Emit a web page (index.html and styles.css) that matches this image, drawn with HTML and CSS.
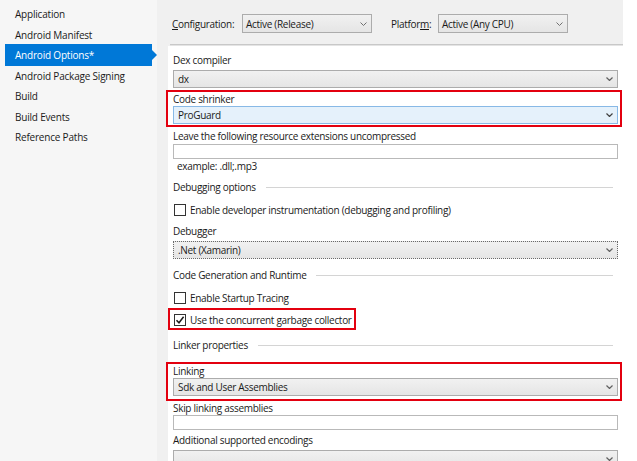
FILE: index.html
```html
<!DOCTYPE html>
<html>
<head>
<meta charset="utf-8">
<link rel="stylesheet" href="styles.css">
</head>
<body>
<div class="app">
  <nav class="sidebar">
    <div class="nav-item">Application</div>
    <div class="nav-item">Android Manifest</div>
    <div class="nav-item selected">Android Options*</div>
    <div class="nav-item">Android Package Signing</div>
    <div class="nav-item">Build</div>
    <div class="nav-item">Build Events</div>
    <div class="nav-item">Reference Paths</div>
  </nav>
  <div class="main">
    <div class="topbar">
      <div class="toprow">
        <span class="toplabel"><u>C</u>onfiguration:</span>
        <div class="combo top-combo"><span>Active (Release)</span><svg class="chev" width="7" height="4" viewBox="0 0 7 4"><path d="M0.5 0.5 L3.5 3.5 L6.5 0.5" fill="none" stroke="#707070" stroke-width="1"/></svg></div>
        <span class="toplabel platform">Platfor<u>m</u>:</span>
        <div class="combo top-combo"><span>Active (Any CPU)</span><svg class="chev" width="7" height="4" viewBox="0 0 7 4"><path d="M0.5 0.5 L3.5 3.5 L6.5 0.5" fill="none" stroke="#707070" stroke-width="1"/></svg></div>
      </div>
      <div class="sep"></div>
    </div>
    <div class="content">
      <div class="label">Dex compiler</div>
      <div class="combo field-combo"><span>dx</span><svg class="chev" width="7" height="4" viewBox="0 0 7 4"><path d="M0.5 0.5 L3.5 3.5 L6.5 0.5" fill="none" stroke="#606060" stroke-width="1.2"/></svg></div>

      <div class="hl hl-shrinker">
        <div class="label tight">Code shrinker</div>
        <div class="combo field-combo focus-blue"><span>ProGuard</span><svg class="chev" width="7" height="4" viewBox="0 0 7 4"><path d="M0.5 0.5 L3.5 3.5 L6.5 0.5" fill="none" stroke="#404040" stroke-width="1.2"/></svg></div>
      </div>

      <div class="label gap1">Leave the following resource extensions uncompressed</div>
      <div class="input"></div>
      <div class="hint">example: .dll;.mp3</div>

      <div class="section s-debug">Debugging options</div>
      <div class="check c-first"><span class="box"></span><span>Enable developer instrumentation (debugging and profiling)</span></div>

      <div class="label gap5">Debugger</div>
      <div class="combo field-combo dotted"><span>.Net (Xamarin)</span><svg class="chev" width="7" height="4" viewBox="0 0 7 4"><path d="M0.5 0.5 L3.5 3.5 L6.5 0.5" fill="none" stroke="#606060" stroke-width="1.2"/></svg></div>

      <div class="section s-codegen">Code Generation and Runtime</div>
      <div class="check c-first"><span class="box"></span><span>Enable Startup Tracing</span></div>
      <div class="hl hl-check">
        <div class="check"><span class="box checked"><svg width="10" height="10" viewBox="0 0 10 10"><path d="M1.5 5.2 L4 7.8 L8.6 1.8" fill="none" stroke="#1a1a1a" stroke-width="1.5"/></svg></span><span>Use the concurrent garbage collector</span></div>
      </div>

      <div class="section s-linker">Linker properties</div>
      <div class="hl hl-linking">
        <div class="label tight">Linking</div>
        <div class="combo field-combo"><span>Sdk and User Assemblies</span><svg class="chev" width="7" height="4" viewBox="0 0 7 4"><path d="M0.5 0.5 L3.5 3.5 L6.5 0.5" fill="none" stroke="#606060" stroke-width="1.2"/></svg></div>
      </div>
      <div class="label tight">Skip linking assemblies</div>
      <div class="input"></div>
      <div class="label gap2">Additional supported encodings</div>
      <div class="combo field-combo"><span></span><svg class="chev" width="7" height="4" viewBox="0 0 7 4"><path d="M0.5 0.5 L3.5 3.5 L6.5 0.5" fill="none" stroke="#606060" stroke-width="1.2"/></svg></div>
    </div>
  </div>
</div>
</body>
</html>
```
FILE: styles.css
```css
html, body {
  margin: 0;
  padding: 0;
}
body {
  font-family: "Open Sans", "Noto Sans", sans-serif;
  font-size: 10px;
  letter-spacing: -0.3px;
  color: #1a1a1a;
  background: #fff;
}
.app {
  display: flex;
  width: 637px;
  height: 461px;
  overflow: hidden;
  background: #fff;
}
.sidebar {
  width: 157px;
  flex: none;
  background: #f6f6f6;
  padding-top: 4px;
  box-sizing: border-box;
  letter-spacing: -0.2px;
}
.nav-item {
  height: 20.5px;
  line-height: 20.5px;
  padding-left: 15px;
  position: relative;
  white-space: nowrap;
}
.nav-item.selected {
  margin: -1px 0 -0.5px 5px;
  padding-left: 10px;
  width: 147px;
  height: 22px;
  line-height: 22px;
  box-sizing: border-box;
  background: #0078d7;
  color: #fff;
}
.nav-item.selected::after {
  content: "";
  position: absolute;
  right: -5px;
  top: 6px;
  border-left: 5px solid #0078d7;
  border-top: 5px solid transparent;
  border-bottom: 5px solid transparent;
}
.main {
  width: 466px;
  flex: none;
  background: #f0f0f0;
  display: flex;
  flex-direction: column;
}
.topbar {
  height: 48px;
  box-sizing: border-box;
  padding-top: 14px;
}
.toprow {
  display: flex;
  align-items: center;
  padding-left: 15px;
  height: 19px;
}
.toplabel {
  width: 70px;
}
.toplabel.platform {
  margin-left: 19px;
  width: 47px;
}
.toplabel u {
  text-decoration-thickness: 1px;
  text-underline-offset: 1px;
}
.sep {
  margin: 11px 0 0 13px;
  height: 1px;
  background: #c8c8c8;
  border-bottom: 1px solid #e4e4e4;
}
.combo {
  box-sizing: border-box;
  border: 1px solid #acacac;
  background: linear-gradient(#f1f1f1, #e5e5e5);
  display: flex;
  align-items: center;
  justify-content: space-between;
  white-space: nowrap;
}
.top-combo {
  width: 130px;
  height: 19px;
  padding: 0 4px 0 3px;
}
.field-combo {
  height: 18px;
  padding: 0 4px 0 4px;
  margin-top: 2px;
}
.chev {
  display: block;
  flex: none;
}
.focus-blue {
  background: #e5f1fb;
  border-color: #88b9e6;
}
.dotted {
  border: 1px dotted #6a6a6a;
}
.content {
  flex: 1;
  margin-left: 11px;
  background: #fff;
  padding: 6px 5px 0 5px;
}
.label {
  line-height: 16px;
  white-space: nowrap;
}
.label.tight {
  line-height: 14px;
}
.hl .field-combo {
  margin-top: 0;
}
.gap1 { margin-top: 1px; }
.gap2 { margin-top: 2px; }
.gap5 { margin-top: 5px; }
.hl {
  border: 2px solid #e3000f;
}
.hl-shrinker {
  margin: 2px -4px 0 -7px;
  padding: 0 2px 1px 5px;
}
.hl-linking {
  margin: 9px -4px 0 -7px;
  padding: 0 2px 3px 5px;
}
.hl-check {
  width: fit-content;
  margin: 2px 0 0 -5px;
  padding: 2px 2px 0 3px;
}
.input {
  height: 15px;
  box-sizing: border-box;
  border: 1px solid #b9b9b9;
  background: #fff;
}
.hint {
  line-height: 14px;
  padding-left: 4px;
}
.section {
  display: flex;
  align-items: center;
  line-height: 16px;
  white-space: nowrap;
}
.section::after {
  content: "";
  flex: 1;
  height: 1px;
  background: #d4d4d4;
  margin: 0 5px 0 10px;
}
.s-debug { margin-top: 6px; }
.s-codegen { margin-top: 8px; }
.s-linker { margin-top: 7px; }
.check {
  display: flex;
  align-items: center;
  height: 16px;
  white-space: nowrap;
}
.c-first { margin-top: 7px; }
.box {
  width: 12px;
  height: 12px;
  box-sizing: border-box;
  border: 1px solid #333;
  background: #fff;
  margin: 0 4px 0 1px;
  display: flex;
  align-items: center;
  justify-content: center;
  flex: none;
}
.box svg {
  display: block;
}
```
